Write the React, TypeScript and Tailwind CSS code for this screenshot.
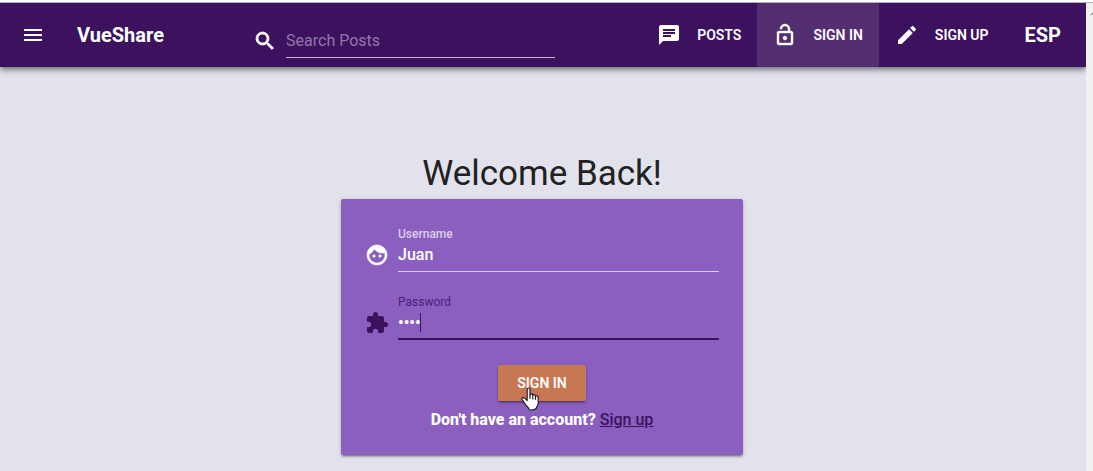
import React, { useState } from "react";
import type { ReactNode } from "react";
import {
  MdChat,
  MdEdit,
  MdExtension,
  MdFace,
  MdLockOpen,
  MdMenu,
  MdSearch,
} from "react-icons/md";

type NavLinkProps = { icon: ReactNode; label: string; active?: boolean };

function NavLink({ icon, label, active = false }: NavLinkProps) {
  return (
    <a
      href="#"
      aria-current={active ? "page" : undefined}
      className={
        active
          ? "flex items-center gap-4 rounded-xs bg-[#532f71] px-4 text-sm font-semibold text-white"
          : "flex items-center gap-4 rounded-xs px-4 text-sm font-semibold text-white"
      }
    >
      {icon}
      <span className="whitespace-nowrap">{label}</span>
    </a>
  );
}

function Toolbar() {
  return (
    <header className="relative flex h-16 shrink-0 items-stretch bg-[#3c125f] pr-[25px] pl-[21px] text-white shadow-[0_2px_4px_-1px_rgba(0,0,0,0.3),0_4px_5px_rgba(0,0,0,0.2),0_1px_10px_rgba(0,0,0,0.18)]">
      <button type="button" aria-label="Open menu" className="mr-8 flex items-center">
        <MdMenu className="size-6" />
      </button>
      <a href="#" className="mr-[3px] flex items-center text-xl font-bold">
        VueShare
      </a>
      <div className="flex-1" />
      <div className="flex w-[302px] items-center gap-[9px] pt-3">
        <label htmlFor="search" aria-label="Search Posts">
          <MdSearch className="size-6 [&>path:last-child]:stroke-[0.8]" />
        </label>
        <input
          id="search"
          type="text"
          placeholder="Search Posts"
          className="h-[34px] min-w-0 flex-1 border-b border-[#c9b3dd] bg-transparent text-base placeholder:text-[#9377ab] focus:outline-none"
        />
      </div>
      <div className="flex-1" />
      <nav className="flex">
        <NavLink icon={<MdChat className="size-6" />} label="POSTS" />
        <NavLink icon={<MdLockOpen className="size-6 [&>path:last-child]:stroke-[0.4]" />} label="SIGN IN" active />
        <NavLink icon={<MdEdit className="size-6" />} label="SIGN UP" />
      </nav>
      <button type="button" className="ml-5 text-xl font-bold">
        ESP
      </button>
    </header>
  );
}

function HandPointer() {
  return (
    <svg
      aria-hidden="true"
      viewBox="0 0 18 24"
      className="pointer-events-none absolute top-[22px] left-[23px] h-6 w-[18px]"
    >
      <path
        d="M6.2 13.6 L6.2 2.6 Q6.2 1 7.6 1 Q9 1 9 2.6 L9 7.8 Q9.3 6.8 10.4 6.9 Q11.7 7 11.8 8.2 Q12.2 7.4 13.2 7.6 Q14.4 7.8 14.5 9.1 Q15 8.5 15.9 8.9 Q17.2 9.3 17.2 10.8 L17.2 15.5 Q17.2 18 15.8 19.8 L15.2 21.5 Q12 23.6 8.3 22.8 L7.5 21 Q4.6 18.3 3.4 15.8 L1.1 12.7 Q0.4 11.4 1.5 10.8 Q2.8 10.2 4 11.4 Z"
        fill="#fff"
        stroke="#1c1427"
        strokeWidth="1.1"
        strokeLinejoin="round"
      />
      <path d="M9 7.5V12 M11.8 8V12.4 M14.5 9V12.8" fill="none" stroke="#1c1427" strokeWidth="1.1" />
    </svg>
  );
}

function SignInCard() {
  const [username, setUsername] = useState("Juan");
  const [password, setPassword] = useState("juan");

  return (
    <form
      onSubmit={(event) => event.preventDefault()}
      className="w-full max-w-[402px] rounded-xs bg-[#8b5fbf] px-6 pt-[27px] pb-[23px] text-white shadow-[0_3px_1px_-2px_rgba(0,0,0,0.2),0_2px_2px_rgba(0,0,0,0.2),0_1px_5px_rgba(0,0,0,0.14)]"
    >
      <div className="flex gap-[9px]">
        <MdFace className="mt-[17px] size-6 shrink-0 [&>path:last-child]:stroke-[0.6]" />
        <div className="flex min-w-0 flex-1 flex-col">
          <label htmlFor="username" className="text-xs font-medium text-[#dccfec]">
            Username
          </label>
          <input
            id="username"
            type="text"
            value={username}
            onChange={(event) => setUsername(event.target.value)}
            className="h-[30px] border-b border-[#dccfec] bg-transparent pb-1 text-base font-medium focus:outline-none"
          />
        </div>
      </div>

      <div className="mt-[22px] flex gap-[9px] text-[#3c125f]">
        <MdExtension className="mt-[17px] size-6 shrink-0" />
        <div className="relative flex min-w-0 flex-1 flex-col">
          <label htmlFor="password" className="text-xs text-[#4d2075]">
            Password
          </label>
          <input
            id="password"
            type="password"
            value={password}
            onChange={(event) => setPassword(event.target.value)}
            className="h-[30px] border-b-2 border-[#3c125f] bg-transparent pb-1 text-base font-semibold text-white caret-transparent focus:outline-none"
          />
          <span className="pointer-events-none absolute top-[19px] left-[22px] h-[19px] w-px bg-[#3c125f]" />
        </div>
      </div>

      <div className="mt-[25px] flex flex-col items-center">
        <div className="relative">
          <button
            type="submit"
            className="block h-9 w-[88px] rounded-xs bg-[#c77753] text-sm font-semibold shadow-[0_3px_1px_-2px_rgba(0,0,0,0.2),0_2px_2px_rgba(0,0,0,0.2),0_1px_5px_rgba(0,0,0,0.14)]"
          >
            SIGN IN
          </button>
          <HandPointer />
        </div>
        <p className="mt-[7px] text-base font-extrabold">
          Don't have an account?{" "}
          <a href="#" className="font-medium text-[#3c125f] underline">
            Sign up
          </a>
        </p>
      </div>
    </form>
  );
}

export default function App() {
  return (
    <div className="flex min-h-screen flex-col bg-white pt-0.5 font-[Roboto,sans-serif]">
      <div className="flex flex-1 border-t border-[#b4b0b4]">
        <div className="flex min-w-0 flex-1 flex-col overflow-hidden bg-[#e2e2ec]">
          <Toolbar />
          <main className="flex flex-col items-center pt-[85px] pr-[18px] pb-4 pl-4">
            <h1 className="text-[35px] leading-[44px] text-[#212121]">Welcome Back!</h1>
            <div className="mt-[3px] flex w-full justify-center">
              <SignInCard />
            </div>
          </main>
        </div>
        <div className="flex w-[7px] justify-end overflow-hidden bg-[#f1f1f1] pt-2">
          <svg viewBox="0 0 3 4" className="h-1 w-[3px]" aria-hidden="true">
            <path d="M0 4 L3 1 V4 Z" fill="#a3a3a3" />
          </svg>
        </div>
      </div>
    </div>
  );
}
